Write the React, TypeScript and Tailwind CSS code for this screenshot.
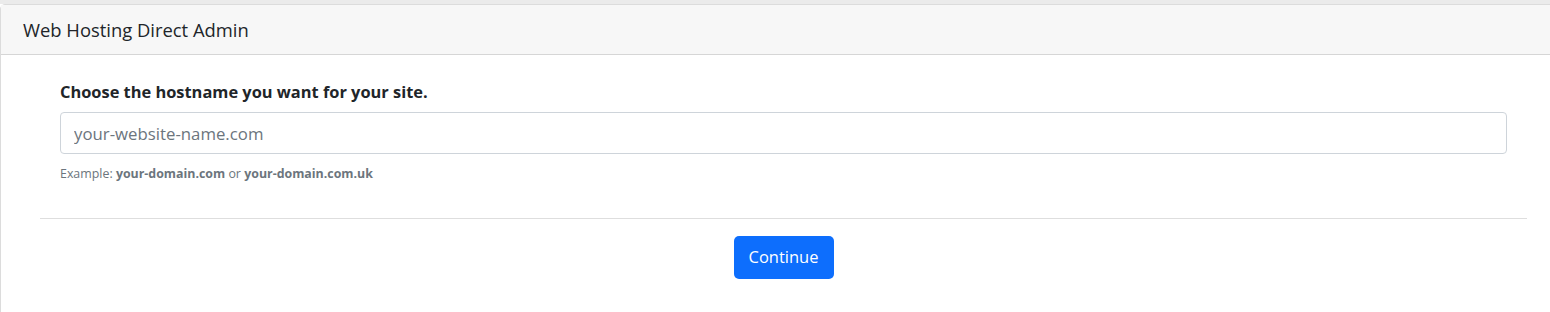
export default function App() {
  return (
    <div className="min-h-[312px] overflow-hidden bg-white pt-1 font-['Open_Sans',sans-serif]">
      <div className="absolute inset-x-0 top-0 h-1 bg-[#ebebeb]" />
      <div className="relative w-[1568px] rounded-tl-[5px] border border-[#dcdcdc] bg-white min-h-[320px]">
        <div className="flex h-[50px] items-center border-b border-[#d6d6d6] bg-[#f7f7f7] px-[22px]">
          <h1 className="text-[18.4px] text-[#212529]">Web Hosting Direct Admin</h1>
        </div>
        <div className="pl-[39px] pr-10 pt-[25px]">
          <div className="px-5">
            <label className="block text-[16.4px] font-bold leading-6 text-[#212529]">
              Choose the hostname you want for your site.
            </label>
            <input
              type="text"
              placeholder="your-website-name.com"
              className="mt-[8px] block h-[42px] w-full rounded-[4px] border border-[#ced4da] px-[13px] text-[16.8px] text-[#212529] placeholder:text-[#6c757d] outline-none"
            />
            <p className="mt-[11px] text-[12.4px] text-[#6c757d]">
              Example: <b>your-domain.com</b> or <b>your-domain.com.uk</b>
            </p>
          </div>
          <hr className="mt-[34px] border-[#dedede]" />
          <div className="flex justify-center pt-[17px]">
            <button className="h-[43px] rounded-[5px] bg-[#0d6efd] px-[15px] text-[16.5px] text-white">
              Continue
            </button>
          </div>
        </div>
      </div>
    </div>
  );
}
